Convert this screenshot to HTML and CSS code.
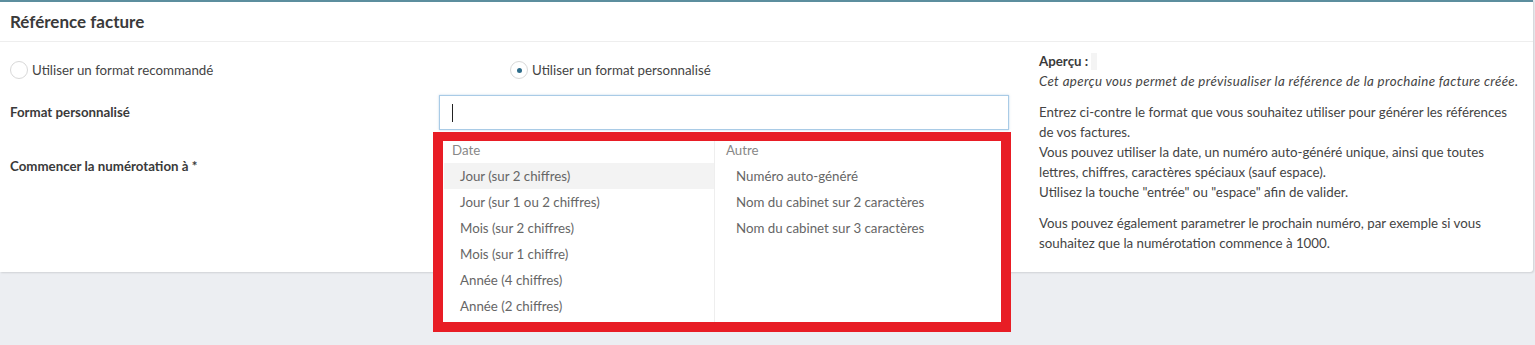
FILE: index.html
```html
<!DOCTYPE html>
<html lang="fr">
<head>
<meta charset="utf-8">
<title>Référence facture</title>
<link rel="stylesheet" href="styles.css">
</head>
<body>
<section class="card">
  <header class="card-header">
    <h2 class="card-title">Référence facture</h2>
  </header>
  <div class="card-body">
    <div class="form-area">
      <div class="radio-row">
        <label class="radio">
          <span class="radio-circle"></span>
          <span>Utiliser un format recommandé</span>
        </label>
        <label class="radio">
          <span class="radio-circle checked"></span>
          <span>Utiliser un format personnalisé</span>
        </label>
      </div>
      <div class="form-row">
        <div class="form-label">Format personnalisé</div>
        <div class="field">
          <div class="input"><span class="caret"></span></div>
          <div class="dropdown">
            <div class="dd-col dd-left">
              <div class="dd-head">Date</div>
              <div class="dd-item active">Jour (sur 2 chiffres)</div>
              <div class="dd-item">Jour (sur 1 ou 2 chiffres)</div>
              <div class="dd-item">Mois (sur 2 chiffres)</div>
              <div class="dd-item">Mois (sur 1 chiffre)</div>
              <div class="dd-item">Année (4 chiffres)</div>
              <div class="dd-item">Année (2 chiffres)</div>
            </div>
            <div class="dd-col dd-right">
              <div class="dd-head">Autre</div>
              <div class="dd-item">Numéro auto-généré</div>
              <div class="dd-item">Nom du cabinet sur 2 caractères</div>
              <div class="dd-item">Nom du cabinet sur 3 caractères</div>
            </div>
          </div>
        </div>
      </div>
      <div class="form-row second">
        <div class="form-label">Commencer la numérotation à *</div>
      </div>
    </div>
    <aside class="help">
      <div class="preview-line"><strong>Aperçu :</strong><span class="preview-box"></span></div>
      <p class="preview-note">Cet aperçu vous permet de prévisualiser la référence de la prochaine facture créée.</p>
      <p class="help-text">Entrez ci-contre le format que vous souhaitez utiliser pour générer les références de vos factures.<br>Vous pouvez utiliser la date, un numéro auto-généré unique, ainsi que toutes lettres, chiffres, caractères spéciaux (sauf espace).<br>Utilisez la touche "entrée" ou "espace" afin de valider.</p>
      <p class="help-text">Vous pouvez également parametrer le prochain numéro, par exemple si vous souhaitez que la numérotation commence à 1000.</p>
    </aside>
  </div>
</section>
</body>
</html>
```

FILE: styles.css
```css
* { box-sizing: border-box; }
html, body { margin: 0; padding: 0; }
body {
  background: #eceef2;
  font-family: Lato, "Open Sans", sans-serif;
  font-size: 13.3px;
  color: #444;
  height: 345px;
  overflow: hidden;
}
.card {
  background: #fff;
  border-top: 2px solid #5c8e9e;
  width: 1533px;
  height: 272px;
  box-shadow: 1px 1px 2px rgba(0,0,0,0.12);
  border-radius: 0 0 3px 0;
}
.card-header {
  height: 40px;
  border-bottom: 1px solid #eeeeee;
  padding: 0 10px;
  display: flex;
  align-items: center;
}
.card-title {
  margin: 0;
  font-size: 17px;
  font-weight: 700;
  color: #3a3a3a;
}
.card-body {
  display: flex;
  padding: 0 0 0 10px;
}
.form-area {
  width: 1000px;
  flex: none;
}
.radio-row {
  display: grid;
  grid-template-columns: 500px 500px;
  padding-top: 19px;
  height: 53px;
}
.radio {
  display: flex;
  align-items: center;
  gap: 4px;
  color: #444;
  height: 18px;
}
.radio-circle {
  width: 18px;
  height: 18px;
  border: 1px solid #d8d8d8;
  border-radius: 50%;
  display: flex;
  align-items: center;
  justify-content: center;
  flex: none;
}
.radio-circle.checked::after {
  content: "";
  width: 5px;
  height: 5px;
  border-radius: 50%;
  background: #2d6c8a;
}
.form-row {
  display: grid;
  grid-template-columns: 429px 570px;
  align-items: center;
}
.form-label {
  font-weight: 700;
  color: #3a3a3a;
  height: 35px;
  line-height: 35px;
}
.form-row.second .form-label {
  margin-top: 19px;
}
.field {
  position: relative;
}
.input {
  height: 35px;
  border: 1px solid #a9cbe6;
  box-shadow: 0 0 2px rgba(120,170,210,0.5);
  background: #fff;
  padding: 8px 12px;
}
.caret {
  display: block;
  width: 1px;
  height: 18px;
  background: #222;
}
.dropdown {
  position: absolute;
  top: 37px;
  left: -6px;
  width: 578px;
  height: 200px;
  border: 10px solid #e81d25;
  border-top-width: 9px;
  background: #fff;
  display: flex;
  z-index: 5;
}
.dd-col {
  display: flex;
  flex-direction: column;
}
.dd-left {
  width: 272px;
  border-right: 1px solid #eeeeee;
}
.dd-right {
  flex: 1;
}
.dd-head {
  height: 22px;
  line-height: 18px;
  color: #888;
  padding-left: 9px;
}
.dd-right .dd-head { padding-left: 11px; }
.dd-item {
  height: 26px;
  line-height: 26px;
  color: #666;
  padding-left: 16px;
  margin-left: 1px;
}
.dd-right .dd-item { padding-left: 20px; }
.dd-item.active { background: #f3f3f3; }
.help {
  margin-left: 29px;
  width: 475px;
  padding-top: 9px;
  line-height: 20px;
}
.preview-line {
  display: flex;
  align-items: center;
  color: #3a3a3a;
}
.preview-line strong { font-weight: 700; }
.preview-box {
  display: inline-block;
  width: 6px;
  height: 17px;
  background: #f4f4f4;
  margin-left: 3px;
}
.preview-note {
  margin: 0;
  font-style: italic;
  letter-spacing: 0.35px;
  white-space: nowrap;
  color: #444;
}
.help-text {
  margin: 11px 0 0;
  color: #444;
}
```
